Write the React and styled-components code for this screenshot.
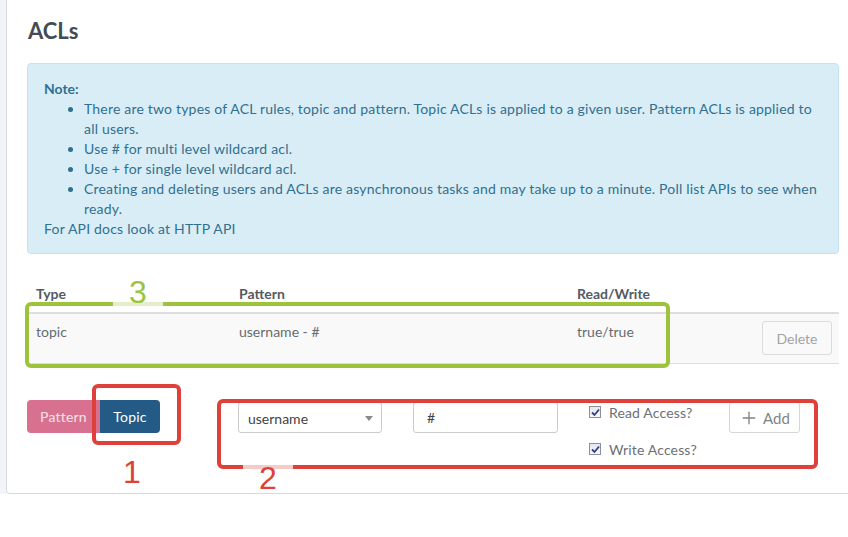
import React from "react";
import styled, { createGlobalStyle } from "styled-components";
import { Plus } from "lucide-react";

const GlobalStyle = createGlobalStyle`
  html, body {
    margin: 0;
    background: #ffffff;
    font-family: Lato, "Liberation Sans", sans-serif;
    font-size: 14px;
  }
  * { box-sizing: border-box; }
`;

const Page = styled.div`
  position: relative;
  display: flex;
  width: 848px;
  height: 537px;
  overflow: hidden;
`;

const Gutter = styled.div`
  width: 6px;
  height: 494px;
  background: #f3f4f8;
`;

const Card = styled.section`
  flex: 1;
  height: 494px;
  padding: 17px 9px 0 20px;
  border-left: 1px solid #d6d9e1;
  border-bottom: 1px solid #d6d9e1;
  border-bottom-left-radius: 4px;
  background: #fff;
`;

const Title = styled.h2`
  margin: 0 0 18px 1px;
  font-size: 22px;
  line-height: 28px;
  font-weight: 700;
  color: #434c55;
`;

const Note = styled.div`
  padding: 15px 16px 14px 16px;
  background: #d9edf7;
  border: 1px solid #c4e3f0;
  border-radius: 4px;
  color: #31708f;
  line-height: 20px;
  letter-spacing: 0.19px;
`;

const NoteTitle = styled.strong`
  display: block;
  font-weight: 700;
  letter-spacing: 0;
`;

const NoteList = styled.ul`
  margin: 0;
  padding-left: 40px;
  list-style: disc;
`;

const Table = styled.table`
  width: 100%;
  margin-top: 22px;
  border-collapse: collapse;
  table-layout: fixed;
`;

const Th = styled.th`
  width: ${p => p.$w || "auto"};
  padding: 8px 9px;
  text-align: left;
  font-weight: 700;
  line-height: 20px;
  color: #555b61;
  border-bottom: 2px solid #dddddd;
`;

const Row = styled.tr`
  background: #f9f9f9;
  border-bottom: 1px solid #dddddd;
`;

const Td = styled.td`
  padding: 8px ${p => (p.$right ? "7px" : "9px")};
  vertical-align: top;
  line-height: 20px;
  color: #666b70;
  text-align: ${p => (p.$right ? "right" : "left")};
`;

const DeleteButton = styled.button`
  width: 70px;
  height: 34px;
  margin-top: -1px;
  font-family: inherit;
  font-size: 14px;
  color: #a0a4a8;
  background: #f9f9f9;
  border: 1px solid #dcdcdc;
  border-radius: 3px;
`;

const FormRow = styled.div`
  display: flex;
  align-items: flex-start;
  margin-top: 36px;
`;

const ButtonGroup = styled.div`
  display: flex;
`;

const ToggleButton = styled.button`
  width: ${p => p.$w}px;
  height: 33px;
  padding: 0;
  font-family: inherit;
  font-size: 14px;
  letter-spacing: 0.2px;
  border: none;
  color: ${p => (p.$active ? "#ffffff" : "#f5e4ea")};
  background: ${p => (p.$active ? "#245a86" : "#d8718f")};
  border-radius: ${p => (p.$active ? "0 4px 4px 0" : "4px 0 0 4px")};
`;

const Select = styled.div`
  position: relative;
  width: 144px;
  height: 31px;
  margin: 2px 0 0 78px;
  padding: 0 9px;
  border: 1px solid #cccccc;
  border-radius: 3px;
  line-height: 31px;
  color: #444;
  background: #fff;

  &::after {
    content: "";
    position: absolute;
    right: 8px;
    top: 13px;
    border-left: 4px solid transparent;
    border-right: 4px solid transparent;
    border-top: 5px solid #8a8a8a;
  }
`;

const TextInput = styled.input`
  width: 145px;
  height: 31px;
  margin: 2px 0 0 31px;
  padding: 0 13px;
  border: 1px solid #cccccc;
  border-radius: 3px;
  font-family: inherit;
  font-size: 14px;
  color: #444;
`;

const Checks = styled.div`
  display: flex;
  flex-direction: column;
  gap: 17px;
  width: 140px;
  margin: 2px 0 0 31px;
`;

const CheckRow = styled.label`
  display: flex;
  align-items: center;
  gap: 8px;
  height: 20px;
  color: #6b7075;
  letter-spacing: 0.15px;
`;

const Box = styled.span`
  display: inline-flex;
  align-items: center;
  justify-content: center;
  width: 12px;
  height: 12px;
  border: 1px solid #8d9096;
  background: linear-gradient(#e4e7ee, #f7f8fb);
`;

const AddButton = styled.button`
  display: inline-flex;
  align-items: center;
  gap: 4px;
  width: 71px;
  height: 31px;
  margin-top: 2px;
  padding: 0 0 0 9px;
  font-family: inherit;
  font-size: 15px;
  color: #7f8388;
  background: #fff;
  border: 1px solid #d6d6d6;
  border-radius: 3px;
`;

const Callout = styled.div`
  position: absolute;
  left: ${p => p.$x}px;
  top: ${p => p.$y}px;
  width: ${p => p.$w}px;
  height: ${p => p.$h}px;
  border: 4px solid ${p => p.$color};
  border-radius: 6px;
  pointer-events: none;
`;

const Marker = styled.div`
  position: absolute;
  left: ${p => p.$x}px;
  top: ${p => p.$y}px;
  width: 50px;
  height: ${p => p.$h}px;
  display: flex;
  justify-content: center;
  align-items: ${p => p.$align || "flex-end"};
  font-family: "Liberation Sans", sans-serif;
  font-size: 32px;
  line-height: 32px;
  color: ${p => p.$color};
  background: rgba(255, 255, 255, 0.72);
`;

function Check({ label }) {
  return (
    <CheckRow>
      <Box>
        <svg width="9" height="9" viewBox="0 0 9 9">
          <path d="M1 4.5 L3.5 7 L8 1.5" fill="none" stroke="#2f3f8a" strokeWidth="1.8" />
        </svg>
      </Box>
      {label}
    </CheckRow>
  );
}

export default function App() {
  return (
    <>
      <GlobalStyle />
      <Page>
        <Gutter />
        <Card>
          <Title>ACLs</Title>
          <Note>
            <NoteTitle>Note:</NoteTitle>
            <NoteList>
              <li>There are two types of ACL rules, topic and pattern. Topic ACLs is applied to a given user. Pattern ACLs is applied to all users.</li>
              <li>Use # for multi level wildcard acl.</li>
              <li>Use + for single level wildcard acl.</li>
              <li>Creating and deleting users and ACLs are asynchronous tasks and may take up to a minute. Poll list APIs to see when ready.</li>
            </NoteList>
            For API docs look at HTTP API
          </Note>

          <Table>
            <thead>
              <tr>
                <Th $w="203px">Type</Th>
                <Th $w="338px">Pattern</Th>
                <Th $w="186px">Read/Write</Th>
                <Th />
              </tr>
            </thead>
            <tbody>
              <Row>
                <Td>topic</Td>
                <Td>username - #</Td>
                <Td>true/true</Td>
                <Td $right>
                  <DeleteButton>Delete</DeleteButton>
                </Td>
              </Row>
            </tbody>
          </Table>

          <FormRow>
            <ButtonGroup>
              <ToggleButton $w={73}>Pattern</ToggleButton>
              <ToggleButton $w={60} $active>Topic</ToggleButton>
            </ButtonGroup>
            <Select>username</Select>
            <TextInput defaultValue="#" />
            <Checks>
              <Check label="Read Access?" />
              <Check label="Write Access?" />
            </Checks>
            <AddButton>
              <Plus size={20} strokeWidth={1.6} />
              Add
            </AddButton>
          </FormRow>
        </Card>

        <Callout $x={25} $y={302} $w={645} $h={66} $color="#9dc33d" />
        <Marker $x={113} $y={276} $h={36} $color="#9dc33d" $align="flex-start">3</Marker>
        <Callout $x={92} $y={384} $w={89} $h={61} $color="#e0403a" />
        <Marker $x={107} $y={454} $h={36} $color="#e0403a" $align="center">1</Marker>
        <Callout $x={217} $y={399} $w={601} $h={70} $color="#e0403a" />
        <Marker $x={243} $y={464} $h={28} $color="#e0403a" $align="center">2</Marker>
      </Page>
    </>
  );
}
